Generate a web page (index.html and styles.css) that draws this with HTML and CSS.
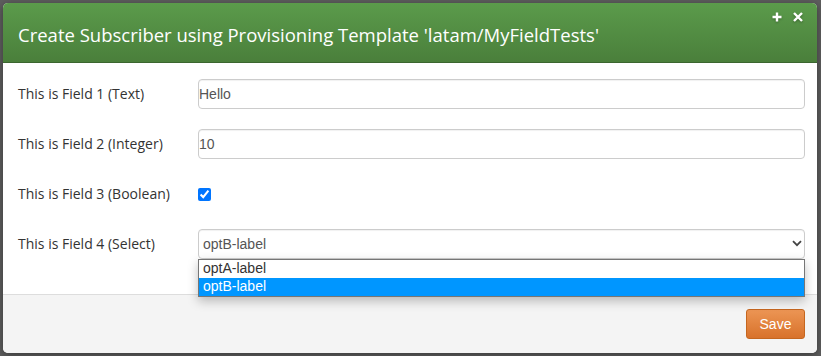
FILE: index.html
```html
<!DOCTYPE html>
<html lang="en">
<head>
    <meta charset="UTF-8">
    <title>Create Subscriber</title>
    <link rel="stylesheet" href="styles.css">
</head>
<body>
    <div class="backdrop">
        <div class="modal">
            <div class="modal-header">
                <h3 class="modal-title">Create Subscriber using Provisioning Template 'latam/MyFieldTests'</h3>
                <div class="modal-tools">
                    <svg width="10" height="10" viewBox="0 0 10 10"><path d="M5 0.5v9M0.5 5h9" stroke="#fff" stroke-width="2.4"/></svg>
                    <svg width="10" height="10" viewBox="0 0 10 10"><path d="M1 1l8 8M9 1l-8 8" stroke="#fff" stroke-width="2.4"/></svg>
                </div>
            </div>
            <div class="modal-body">
                <div class="form-row">
                    <label class="form-label">This is Field 1 (Text)</label>
                    <input class="form-control" type="text" value="Hello">
                </div>
                <div class="form-row">
                    <label class="form-label">This is Field 2 (Integer)</label>
                    <input class="form-control" type="text" value="10">
                </div>
                <div class="form-row">
                    <label class="form-label">This is Field 3 (Boolean)</label>
                    <input class="form-check" type="checkbox" checked>
                </div>
                <div class="form-row">
                    <label class="form-label">This is Field 4 (Select)</label>
                    <div class="select-wrap">
                        <select class="form-control form-select">
                            <option>optA-label</option>
                            <option selected>optB-label</option>
                        </select>
                        <svg class="select-arrow" width="10" height="7" viewBox="0 0 10 7"><path d="M1 1.2l4 4 4-4" fill="none" stroke="#444" stroke-width="1.8"/></svg>
                        <!-- open dropdown of the select -->
                        <ul class="select-list">
                            <li>optA-label</li>
                            <li class="active">optB-label</li>
                        </ul>
                    </div>
                </div>
            </div>
            <div class="modal-footer">
                <button class="btn-save">Save</button>
            </div>
        </div>
    </div>
</body>
</html>
```
FILE: styles.css
```css
* {
    margin: 0;
    padding: 0;
    box-sizing: border-box;
}
body {
    background: #5e5e5e;
    font-family: "Open Sans", "Liberation Sans", sans-serif;
    color: #333;
}
.backdrop {
    width: 821px;
    height: 356px;
    padding: 3px 0 0 3px;
    overflow: hidden;
}
.modal {
    width: 814px;
    height: 350px;
    background: #fff;
    border-radius: 5px;
    overflow: hidden;
    display: flex;
    flex-direction: column;
    box-shadow: 0 2px 8px rgba(0,0,0,0.4);
}
.modal-header {
    height: 60px;
    background: linear-gradient(#5b9b4b, #4a7f3b);
    border-bottom: 1px solid #3b662f;
    display: flex;
    justify-content: space-between;
    padding: 0 14px 0 15px;
}
.modal-title {
    font-weight: normal;
    font-size: 18.5px;
    color: #fff;
    line-height: 60px;
    padding-top: 2px;
}
.modal-tools {
    display: flex;
    gap: 11px;
    padding-top: 9px;
}
.modal-tools svg {
    filter: drop-shadow(0 1px 1px rgba(0,0,0,0.3));
}
.modal-body {
    padding: 16px 12px 0 15px;
    display: flex;
    flex-direction: column;
    gap: 20px;
    height: 231px;
}
.form-row {
    display: flex;
    align-items: center;
    height: 30px;
}
.form-label {
    width: 180px;
    font-size: 14px;
    color: #333;
    padding-bottom: 1px;
}
.form-control {
    flex: 1;
    height: 30px;
    border: 1px solid #ccc;
    border-radius: 4px;
    font-family: "Liberation Sans", Arial, sans-serif;
    font-size: 14px;
    color: #555;
    padding: 0;
    box-shadow: inset 0 1px 1px rgba(0,0,0,0.06);
    outline: none;
}
.form-check {
    width: 13px;
    height: 13px;
    margin: 0;
    accent-color: #0075ff;
}
.select-wrap {
    flex: 1;
    display: flex;
    position: relative;
}
.form-select {
    appearance: none;
    background: #fff;
    padding-left: 4px;
}
.select-arrow {
    position: absolute;
    right: 3px;
    top: 11px;
}
.select-list {
    list-style: none;
    position: absolute;
    left: 0;
    right: 0;
    top: 30px;
    border: 1px solid #767676;
    background: #fff;
    font-family: "Liberation Sans", Arial, sans-serif;
    font-size: 14px;
    color: #333;
    box-shadow: 0 4px 10px rgba(0,0,0,0.25);
    z-index: 2;
}
.select-list li {
    height: 18px;
    line-height: 17px;
    padding-left: 4px;
}
.select-list .active {
    background: #0096ff;
    color: #fff;
}
.modal-footer {
    flex: 1;
    background: #f4f4f4;
    border-top: 1px solid #ddd;
    display: flex;
    justify-content: flex-end;
    align-items: flex-start;
    padding: 14px 12px 0 0;
}
.btn-save {
    width: 59px;
    height: 30px;
    border: 1px solid #c5661f;
    border-radius: 3px;
    background: linear-gradient(#ec9554, #d8722b);
    color: #fff;
    font-family: "Liberation Sans", Arial, sans-serif;
    font-size: 14px;
}
```
